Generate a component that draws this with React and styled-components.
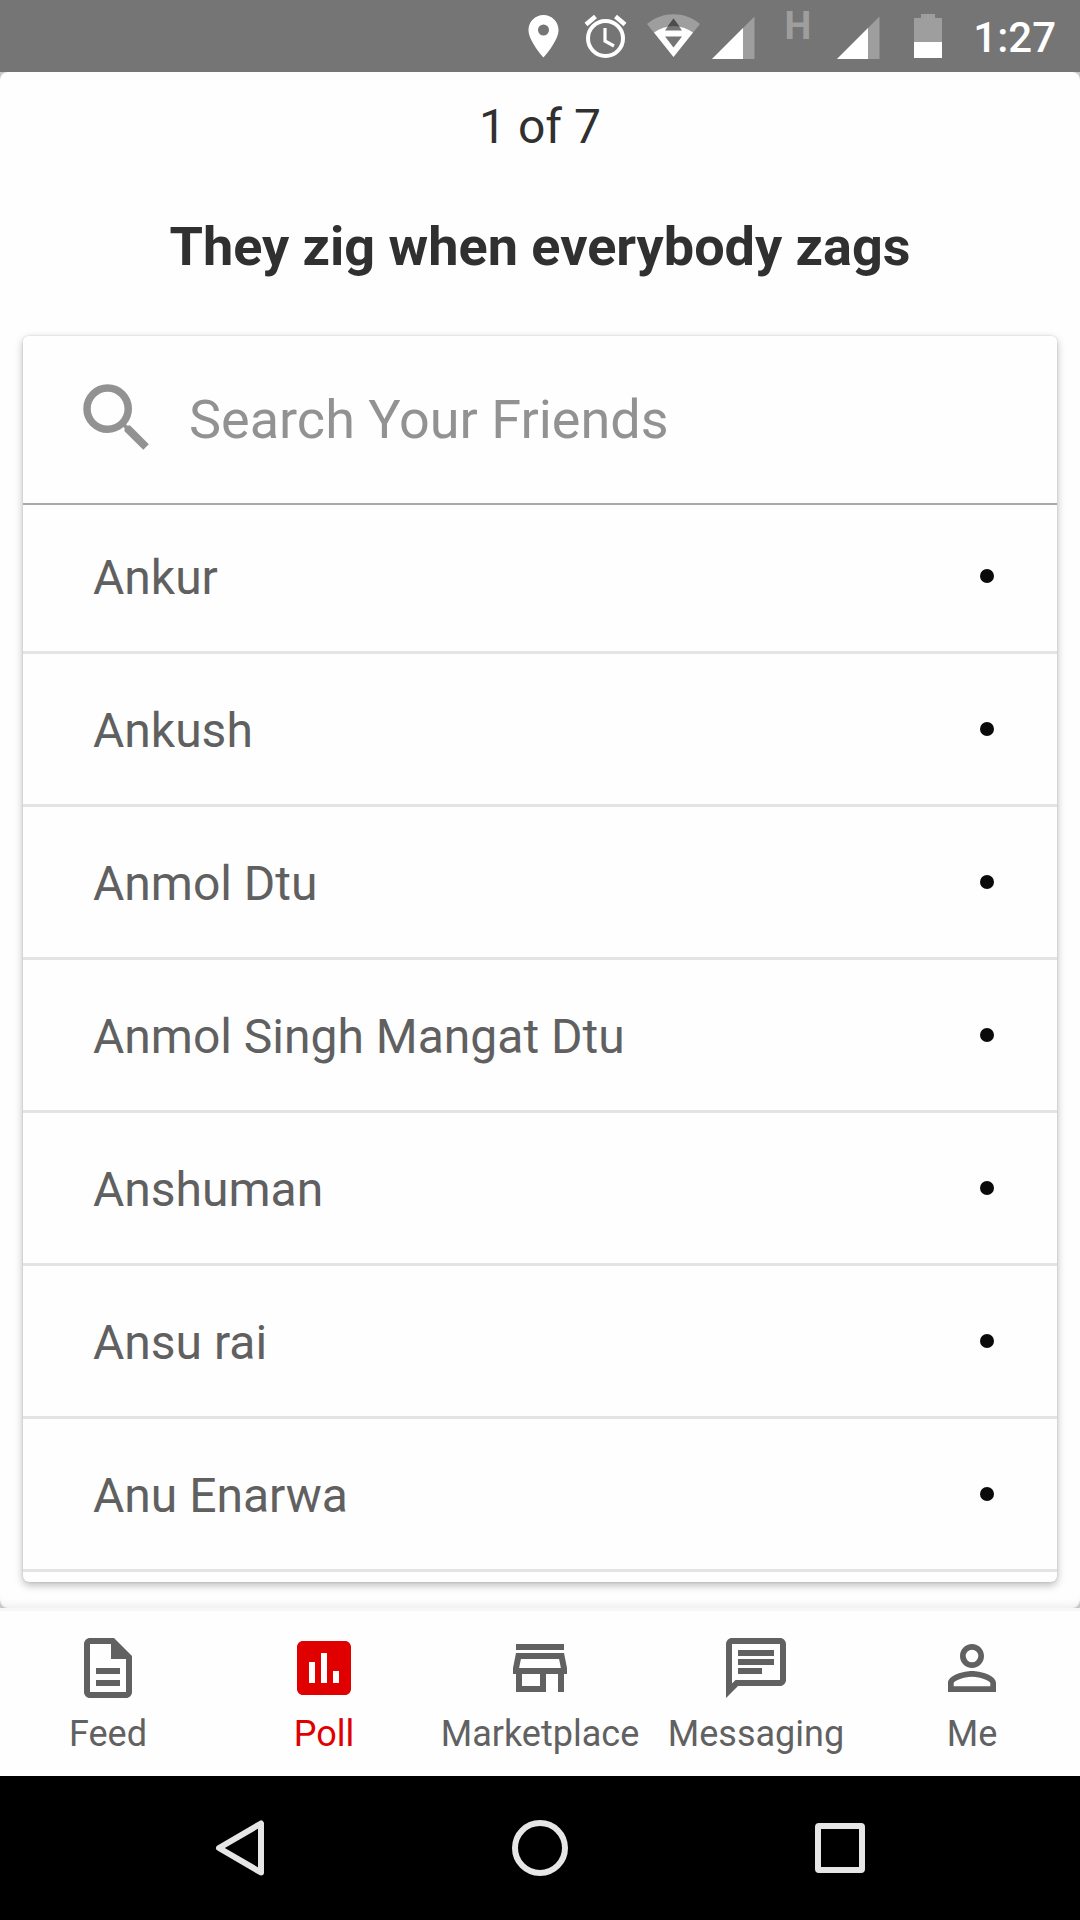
import React, { useState } from "react";
import styled, { createGlobalStyle } from "styled-components";
import {
  MdSearch,
  MdOutlineDescription,
  MdPoll,
  MdOutlineStore,
  MdOutlineChat,
  MdPersonOutline,
} from "react-icons/md";

const GlobalStyle = createGlobalStyle`
  *, *::before, *::after { box-sizing: border-box; }
  body {
    margin: 0;
    background: #fefefe;
    font-family: Roboto, "Noto Sans", sans-serif;
  }
  button, input { font: inherit; }
`;

const Screen = styled.div`
  display: flex;
  flex-direction: column;
  min-height: 100vh;
`;

const StatusBar = styled.header`
  display: flex;
  align-items: center;
  justify-content: flex-end;
  height: 72px;
  padding-right: 24px;
  background: #757575;
  color: #fff;
`;

const StatusIcon = styled.svg`
  flex: none;
  height: 48px;
  margin-right: ${(p) => p.$gap}px;
`;

const NetworkType = styled.span`
  align-self: flex-start;
  margin-right: 26px;
  font-size: 38px;
  font-weight: 700;
  line-height: 52px;
  color: #9e9e9e;
`;

const Clock = styled.time`
  padding-top: 4px;
  font-size: 42px;
  font-weight: 500;
  line-height: 48px;
`;

const Backdrop = styled.main`
  flex: 1;
  display: flex;
  flex-direction: column;
  background: #c8c8c8;
`;

const PollSheet = styled.section`
  flex: 1;
  display: flex;
  flex-direction: column;
  padding: 27px 23px 26px;
  border-radius: 8px;
  background: #fefefe;
  box-shadow: inset 0 -8px 8px -6px rgba(0, 0, 0, 0.08);
`;

const Progress = styled.p`
  margin: 0;
  font-size: 48px;
  line-height: 56px;
  text-align: center;
  color: #303030;
`;

const Question = styled.h1`
  margin: 60px 0 57px;
  font-size: 54px;
  font-weight: 700;
  line-height: 64px;
  text-align: center;
  color: #303030;
`;

const FriendCard = styled.div`
  flex: 1;
  overflow: hidden;
  border-radius: 6px;
  background: #fefefe;
  box-shadow: 0 3px 8px rgba(0, 0, 0, 0.28), 0 0 2px rgba(0, 0, 0, 0.16);
`;

const SearchBar = styled.label`
  position: relative;
  display: flex;
  align-items: center;
  gap: 27px;
  height: 169px;
  margin-bottom: -4px;
  padding: 0 49px;
  border-bottom: 2px solid #a8a8a8;
  background: #fefefe;
  color: #929292;
  svg { margin-bottom: 4px; }
`;

const SearchInput = styled.input`
  flex: 1;
  min-width: 0;
  padding: 0;
  border: 0;
  outline: 0;
  background: transparent;
  font-size: 54px;
  line-height: 64px;
  color: #303030;
  &::placeholder { color: #929292; opacity: 1; }
`;

const FriendList = styled.ul`
  margin: 0;
  padding: 0;
  list-style: none;
`;

const FriendItem = styled.li`
  border-bottom: 3px solid #e4e4e4;
`;

const FriendButton = styled.button`
  display: flex;
  align-items: center;
  justify-content: space-between;
  width: 100%;
  height: 150px;
  padding: 0 63px 0 70px;
  border: 0;
  background: transparent;
  font-size: 48px;
  line-height: 56px;
  text-align: left;
  color: #606060;
`;

const FriendName = styled.span`
  padding-top: 4px;
`;

const Dot = styled.span`
  width: 14px;
  height: 14px;
  border-radius: 50%;
  background: #0a0a0a;
`;

const TabBar = styled.nav`
  display: grid;
  grid-template-columns: repeat(5, 1fr);
  height: 168px;
  border-top: 3px solid #f7f7f7;
  background: #fefefe;
`;

const Tab = styled.button`
  display: flex;
  flex-direction: column;
  align-items: center;
  gap: 9px;
  min-width: 0;
  padding: 21px 0 0;
  border: 0;
  background: transparent;
  font-size: 36px;
  line-height: 42px;
  white-space: nowrap;
  color: ${(p) => (p.$active ? "#e00000" : "#616161")};
`;

const SystemBar = styled.footer`
  display: flex;
  align-items: center;
  justify-content: center;
  gap: 228px;
  height: 144px;
  background: #000;
`;

const SystemButton = styled.button`
  display: grid;
  place-items: center;
  width: 72px;
  height: 72px;
  padding: 0;
  border: 0;
  background: transparent;
`;

const friends = [
  "Ankur",
  "Ankush",
  "Anmol Dtu",
  "Anmol Singh Mangat Dtu",
  "Anshuman",
  "Ansu rai",
  "Anu Enarwa",
];

const tabs = [
  { label: "Feed", Icon: MdOutlineDescription },
  { label: "Poll", Icon: MdPoll },
  { label: "Marketplace", Icon: MdOutlineStore },
  { label: "Messaging", Icon: MdOutlineChat },
  { label: "Me", Icon: MdPersonOutline },
];

function SignalIcon({ gap }) {
  return (
    <StatusIcon $gap={gap} width="43" viewBox="0 0 43 48" aria-hidden="true">
      <path d="M0 47 42.500 4.500V47z" fill="#9e9e9e" />
      <path d="M0 47 31 16V47z" fill="#fff" />
    </StatusIcon>
  );
}

export default function App() {
  const [query, setQuery] = useState("");
  const [active, setActive] = useState("Poll");
  const shown = friends.filter((name) =>
    name.toLowerCase().includes(query.toLowerCase())
  );

  return (
    <>
      <GlobalStyle />
      <Screen>
        <StatusBar>
          <StatusIcon $gap={24} width="32" viewBox="0 0 32 48" aria-hidden="true">
            <path
              d="M15.500 3C7.200 3 .5 9.700 .5 18c0 11.200 15 27.500 15 27.500s15-16.300 15-27.500c0-8.300-6.700-15-15-15zm0 20.500a5.500 5.500 0 1 1 0-11 5.500 5.500 0 0 1 0 11z"
              fill="#fff"
            />
          </StatusIcon>
          <StatusIcon $gap={20} width="43" viewBox="0 0 43 48" fill="none" stroke="#fff" aria-hidden="true">
            <circle cx="21.500" cy="26.500" r="17.500" strokeWidth="4" />
            <path d="M21 16v13l9 5" strokeWidth="3.200" />
            <path d="M2 12.500 11.500 4.500M41 12.500 31.500 4.500" strokeWidth="4.500" />
          </StatusIcon>
          <StatusIcon $gap={11} width="54" viewBox="0 0 54 48" aria-hidden="true">
            <path d="M26.500 45 0 12C15-1 38-1 53 12z" fill="#9e9e9e" />
            <path d="M26.500 45 7 20.500C19 12 34 12 46 20.500z" fill="#fff" />
            <path d="M26.500 6.500 18 18.500h17z" fill="#757575" />
            <path d="M26.500 6.500 20.500 14.500Q26.500 13.500 32.500 14.500z" fill="#4c4c4c" />
            <path d="M18 24.500h17L26.500 35.500z" fill="#757575" />
          </StatusIcon>
          <SignalIcon gap={29} />
          <NetworkType>H</NetworkType>
          <SignalIcon gap={34} />
          <StatusIcon $gap={31} width="28" viewBox="0 0 28 48" aria-hidden="true">
            <path d="M0 6h7V2h14v4h7v40H0z" fill="#9e9e9e" />
            <path d="M0 30h28v16H0z" fill="#fff" />
          </StatusIcon>
          <Clock>1:27</Clock>
        </StatusBar>

        <Backdrop>
          <PollSheet>
            <Progress>1 of 7</Progress>
            <Question>They zig when everybody zags</Question>
            <FriendCard>
              <SearchBar>
                <MdSearch size={90} aria-hidden="true" />
                <SearchInput
                  type="text"
                  aria-label="Search Your Friends"
                  placeholder="Search Your Friends"
                  value={query}
                  onChange={(e) => setQuery(e.target.value)}
                />
              </SearchBar>
              <FriendList>
                {shown.map((name) => (
                  <FriendItem key={name}>
                    <FriendButton type="button">
                      <FriendName>{name}</FriendName>
                      <Dot />
                    </FriendButton>
                  </FriendItem>
                ))}
              </FriendList>
            </FriendCard>
          </PollSheet>
        </Backdrop>

        <TabBar>
          {tabs.map(({ label, Icon }) => (
            <Tab
              key={label}
              type="button"
              $active={label === active}
              onClick={() => setActive(label)}
            >
              <Icon size={72} aria-hidden="true" />
              {label}
            </Tab>
          ))}
        </TabBar>

        <SystemBar>
          <SystemButton type="button" aria-label="Back">
            <svg width="72" height="72" viewBox="0 0 72 72" fill="none" stroke="#e6e6e6" strokeWidth="6" strokeLinejoin="round">
              <path d="M57 11.500v49L15 36z" />
            </svg>
          </SystemButton>
          <SystemButton type="button" aria-label="Home">
            <svg width="72" height="72" viewBox="0 0 72 72" fill="none" stroke="#e6e6e6" strokeWidth="6">
              <circle cx="36" cy="36" r="25" />
            </svg>
          </SystemButton>
          <SystemButton type="button" aria-label="Recent apps">
            <svg width="72" height="72" viewBox="0 0 72 72" fill="none" stroke="#e6e6e6" strokeWidth="6" strokeLinejoin="round">
              <rect x="14" y="14" width="44" height="44" rx="1" />
            </svg>
          </SystemButton>
        </SystemBar>
      </Screen>
    </>
  );
}
